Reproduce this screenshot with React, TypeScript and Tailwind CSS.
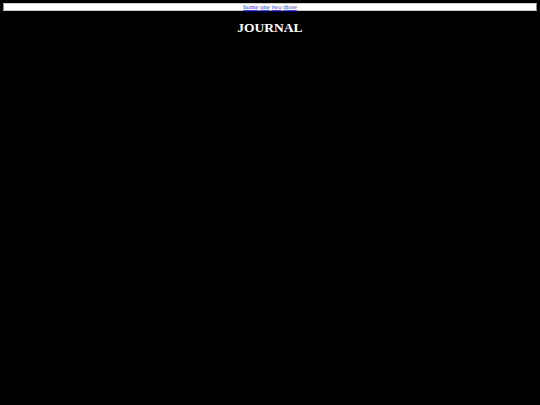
export default function App() {
  return (
    <div className="min-h-[405px] w-full bg-black px-[3px] pt-[3px]" style={{ fontFamily: '"Liberation Serif", "Times New Roman", serif' }}>
      <div className="flex h-[8px] items-center justify-center border-l border-r border-t border-b border-l-[#888] border-r-[#888] border-t-[#ccc] border-b-[#ccc] bg-white text-[6.75px] leading-none">
        <nav className="flex gap-[1.7px]">
          <a href="#" className="text-[#4444dd] underline">home</a>
          <a href="#" className="text-[#4444dd] underline">one</a>
          <a href="#" className="text-[#4444dd] underline">two</a>
          <a href="#" className="text-[#4444dd] underline">three</a>
        </nav>
      </div>
      <h1 className="mt-[10px] text-center text-[13.5px] font-bold leading-none text-white">JOURNAL</h1>
    </div>
  );
}
